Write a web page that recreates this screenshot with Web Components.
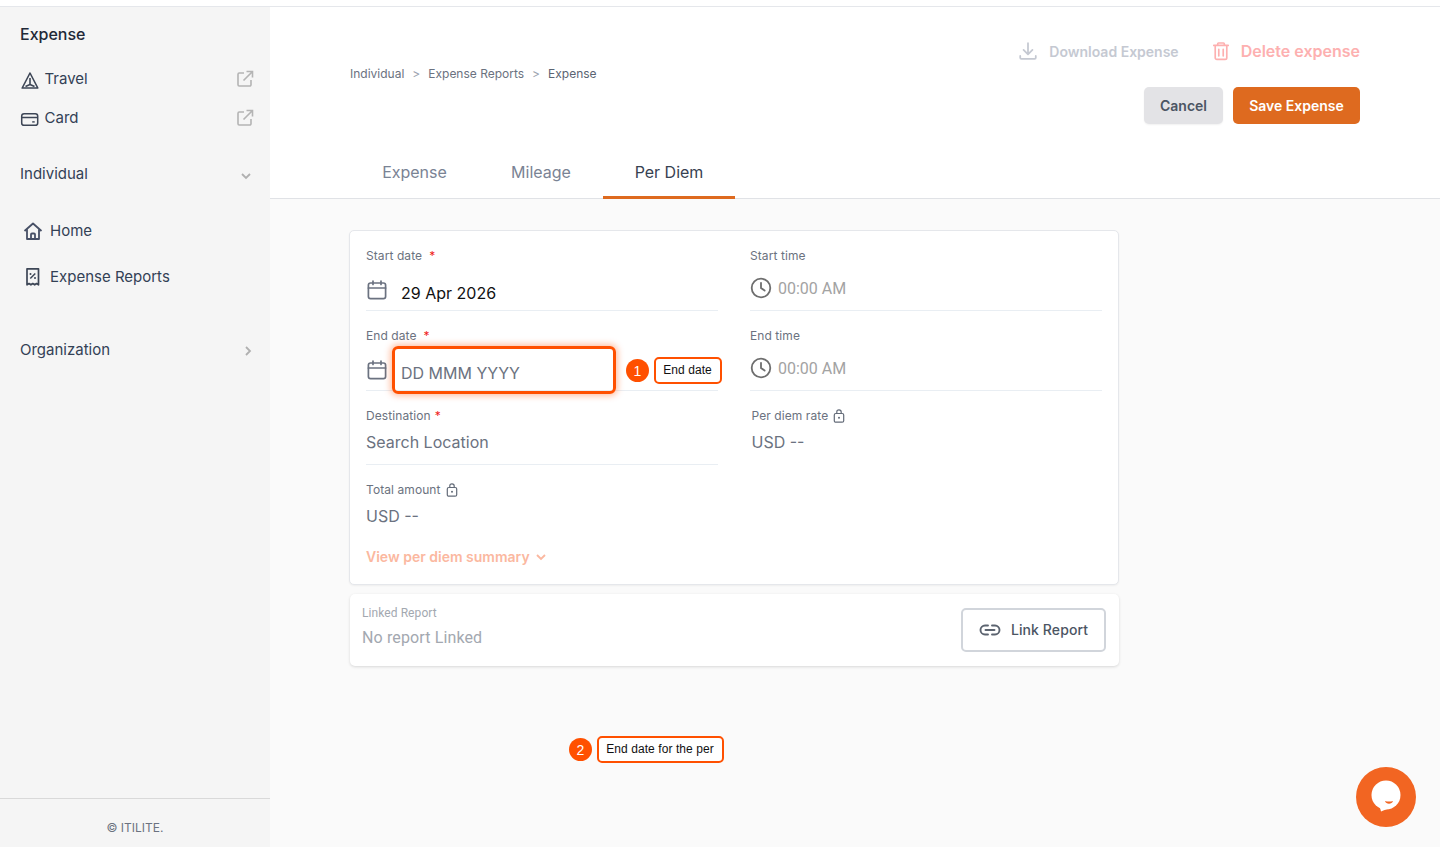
<!DOCTYPE html>
<html lang="en"><head><meta charset="utf-8"><title>Expense</title>
<style>
html,body{margin:0;padding:0;height:100%}
body{width:1440px;height:847px;overflow:hidden;font-family:Inter,"Noto Sans",sans-serif;background:#fafafa;position:relative}
</style></head><body>
<x-app>
  <x-sidebar slot="side"></x-sidebar>
  <x-page-header slot="head"></x-page-header>
  <x-form-card slot="body"></x-form-card>
  <x-linked-card slot="body"></x-linked-card>
</x-app>
<x-callout n="1" style="left:626px;top:357px;width:68px">End date</x-callout>
<x-callout n="2" style="left:569px;top:736px;width:127px">End date for the per</x-callout>
<x-highlight style="left:392px;top:346px;width:224px;height:48px"></x-highlight>
<x-chat></x-chat>
<script>
const I={
 triangle:'<svg width="20" height="20" viewBox="0 0 20 20" fill="none" stroke="#3d4656" stroke-width="1.6" stroke-linejoin="round"><path d="M10 4 2.200 19h15.600z"/><path d="M10 9v6.500M5.500 17.500 10 15.500l4.500 2"/></svg>',
 card:'<svg width="20" height="20" viewBox="0 0 20 20" fill="none" stroke="#3d4656" stroke-width="1.5"><rect x="1.700" y="5.700" width="16" height="11.600" rx="2.400"/><path d="M1.700 9.500h16"/><path d="M12.200 13.900h2.500" stroke-width="1.4"/></svg>',
 ext:'<svg width="18" height="18" viewBox="0 0 18 18" fill="none" stroke="#b4b4b4" stroke-width="1.6"><path d="M8 3H3.200A1.200 1.200 0 0 0 2 4.200V14.800A1.200 1.200 0 0 0 3.200 16H13.800A1.200 1.200 0 0 0 15 14.800V10"/><path d="M7.500 10.500 16 2M10.500 1.500H16.500V7.500"/></svg>',
 down:'<svg width="12" height="12" viewBox="0 0 12 12" fill="none" stroke="#b0b0b0" stroke-width="1.8"><path d="M2 4l4 4 4-4"/></svg>',
 right:'<svg width="12" height="12" viewBox="0 0 12 12" fill="none" stroke="#b0b0b0" stroke-width="1.8"><path d="M4 2l4 4-4 4"/></svg>',
 home:'<svg width="20" height="20" viewBox="0 0 20 20" fill="none" stroke="#475066" stroke-width="1.8" stroke-linejoin="round"><path d="M1.500 10 10 2.500l8.500 7.500"/><path d="M4 8.200V18h12V8.200"/><path d="M8 18v-4.500a1 1 0 0 1 1-1h2a1 1 0 0 1 1 1V18"/></svg>',
 receipt:'<svg width="20" height="20" viewBox="0 0 20 20" fill="none" stroke="#3d4656" stroke-width="1.700" stroke-linejoin="round"><path d="M3 1.800h11.500v16l-1.900-1.300-1.900 1.300-1.900-1.300-1.900 1.300-1.900-1.300L3 17.800z"/><path d="M6.300 11.500 11.300 6.500" stroke-width="1.500"/><circle cx="6.500" cy="7" r="1" fill="#3d4656" stroke="none"/><circle cx="11" cy="11" r="1" fill="#3d4656" stroke="none"/></svg>',
 cal:'<svg width="22" height="22" viewBox="0 0 22 22" fill="none" stroke="#6b7280" stroke-width="1.700" stroke-linecap="round"><rect x="2.400" y="4" width="17.200" height="15.600" rx="2.200"/><path d="M2.400 9h17.200M7 2v3.500M15 2v3.500"/></svg>',
 clock:'<svg width="22" height="22" viewBox="0 0 22 22" fill="none" stroke="#6e6e6e" stroke-width="1.800" stroke-linecap="round"><circle cx="11" cy="11" r="9.300"/><path d="M11 5.800V11l3.600 2.600"/></svg>',
 lock:'<svg width="14" height="14" viewBox="0 0 14 14" fill="none" stroke="#636b78" stroke-width="1.200"><rect x="2.300" y="4.500" width="9.400" height="8.700" rx="1.500"/><path d="M4.800 4.500V3a2.200 2.200 0 0 1 4.400 0v1.500"/><circle cx="7" cy="8.700" r="1" fill="#636b78" stroke="none"/></svg>',
 dl:'<svg width="20" height="20" viewBox="0 0 18 18" fill="none" stroke="#c5c9d2" stroke-width="1.600" stroke-linecap="round" stroke-linejoin="round"><path d="M9 2v9.500M5 8l4 4 4-4M2 13.500V15a1 1 0 0 0 1 1h12a1 1 0 0 0 1-1v-1.500"/></svg>',
 trash:'<svg width="20" height="20" viewBox="0 0 18 18" fill="none" stroke="#fdb0b0" stroke-width="1.500" stroke-linecap="round"><path d="M2.500 4h13M6 4V2.600A.8.800 0 0 1 6.800 1.800h4.400a.8.800 0 0 1 .8.800V4M3.800 4v11a1.500 1.500 0 0 0 1.500 1.500h7.400a1.500 1.500 0 0 0 1.500-1.500V4M7 7.500v6M11 7.500v6"/></svg>',
 link:'<svg width="22" height="22" viewBox="0 0 22 22" fill="none" stroke="#5c6470" stroke-width="1.900" stroke-linecap="round"><path d="M9 6.500H6a4.500 4.500 0 0 0 0 9H9M13 6.500h3a4.500 4.500 0 0 1 0 9H13M6.500 11h9"/></svg>',
 chev:'<svg width="12" height="12" viewBox="0 0 12 12" fill="none" stroke="#fbb8a0" stroke-width="1.900" style="margin-top:1px"><path d="M2 4l4 4 4-4"/></svg>'
};
function def(name,css,html,init){
 customElements.define(name,class extends HTMLElement{
  connectedCallback(){
   if(this.shadowRoot)return;
   const r=this.attachShadow({mode:'open'});
   r.innerHTML='<style>'+css+'</style>'+(typeof html==='function'?html(this):html);
   if(init)init(this,r);
  }
 });
}
def('x-app',`:host{display:flex;flex-direction:column;width:1440px;height:847px}
 .top{height:6px;background:#fff;border-bottom:1px solid #e5e7eb;flex:none}
 .row{flex:1;display:flex;min-height:0}
 .side{width:270px;flex:none;display:flex}
 .main{flex:1;display:flex;flex-direction:column;min-width:0}
 .body{padding:31px 0 0 79px;display:flex;flex-direction:column;gap:9px;width:770px}`,
 `<div class="top"></div><div class="row"><div class="side"><slot name="side"></slot></div>
  <div class="main"><slot name="head"></slot><div class="body"><slot name="body"></slot></div></div></div>`);

def('x-nav-row',`:host{display:flex;align-items:center;height:24px;font-size:15px;color:#334155;line-height:24px}
 .i{display:flex;width:20px;height:20px;flex:none}
 .t{flex:1}
 .e{display:flex}`,
 h=>`<span class="i" style="margin-left:${h.getAttribute('il')||0}px;margin-right:${h.getAttribute('gap')||4.5}px">${I[h.getAttribute('icon')]||''}</span><span class="t"><slot></slot></span><span class="e" style="margin-right:${h.getAttribute('er')||16}px">${h.hasAttribute('end')?I[h.getAttribute('end')]:''}</span>`);

def('x-sidebar',`:host{display:flex;flex-direction:column;width:270px;background:#f5f5f5;height:100%;box-sizing:border-box}
 .in{flex:1;padding:16px 0 0 20px;display:flex;flex-direction:column}
 .h{font-size:16px;font-weight:500;color:#1f2937;line-height:22px;margin-bottom:22px}
 .sec{display:flex;align-items:center;height:24px;font-size:15px;color:#334155}
 .sec span{flex:1}
 .foot{height:49px;border-top:1px solid #d9d9d9;box-sizing:border-box;display:flex;align-items:center;justify-content:center;font-size:12px;color:#6b7280;padding-top:9px}`,
 `<div class="in"><div class="h">Expense</div>
  <x-nav-row icon="triangle" end="ext">Travel</x-nav-row>
  <x-nav-row icon="card" end="ext" style="margin-top:15px">Card</x-nav-row>
  <div class="sec" style="margin-top:31px"><span>Individual</span><span style="flex:none;display:flex;margin:6px 18px 0 0">${I.down}</span></div>
  <x-nav-row icon="home" il="3" gap="7" style="margin-top:34px">Home</x-nav-row>
  <x-nav-row icon="receipt" il="4" gap="6" style="margin-top:22px">Expense Reports</x-nav-row>
  <div class="sec" style="margin-top:48px"><span>Organization</span><span style="flex:none;display:flex;margin:4px 16px 0 0">${I.right}</span></div>
 </div><div class="foot">© ITILITE.</div>`);

def('x-page-header',`:host{display:block;background:#fff;border-bottom:1px solid #e0e2e6;height:192px;box-sizing:border-box;position:relative}
 .top{display:flex;justify-content:space-between;padding:0 80px;height:141px}
 .crumb{font-size:12px;color:#6b7280;margin-top:60px;line-height:14px;display:flex;align-items:center;height:14px}
 .crumb i{font-style:normal;color:#9ca3af;margin:0 8px}
 .crumb b{font-weight:400;color:#5b6472}
 .r{display:flex;flex-direction:column;align-items:flex-end}
 .acts{display:flex;align-items:center;margin-top:34px;height:20px}
 .a{display:flex;align-items:center}
 .dl{font-size:14px;font-weight:600;color:#c5c9d2;margin-right:32px}
 .dl svg{margin-right:11px}
 .del{font-size:16px;font-weight:600;color:#fdb0b0}
 .del svg{margin-right:10px}
 .btns{display:flex;gap:10px;margin-top:26px}
 button{font:600 14px Inter,sans-serif;height:37px;border:0;border-radius:5px;padding:0;cursor:pointer}
 .c{width:79px;background:#e3e3e6;color:#4b5563;box-shadow:0 1px 2px rgba(0,0,0,.06)}
 .s{width:127px;background:#de6a1f;color:#fff}
 .tabs{display:flex;padding-left:80px;height:50px}
 .tab{height:50px;box-sizing:border-box;font-size:16px;color:#7a8394;display:flex;align-items:center;justify-content:center;padding-bottom:3px}
 .on{color:#374151;height:51px;border-bottom:3px solid #de6a1f;padding-bottom:1px}`,
 `<div class="top"><div class="crumb"><span>Individual</span><i>&gt;</i><span>Expense Reports</span><i>&gt;</i><b>Expense</b></div>
  <div class="r"><div class="acts"><span class="a dl">${I.dl}Download Expense</span><span class="a del">${I.trash}Delete expense</span></div>
  <div class="btns"><button class="c">Cancel</button><button class="s">Save Expense</button></div></div></div>
  <div class="tabs"><div class="tab" style="width:129px">Expense</div><div class="tab" style="width:124px">Mileage</div><div class="tab on" style="width:132px">Per Diem</div></div>`);

def('x-field',`:host{display:block;box-sizing:border-box;height:63px;border-bottom:1px solid #e9eef3}
 :host([bare]){border-bottom:0}
 .l{font-size:12px;letter-spacing:.08px;line-height:16px;color:#6b7280;display:flex;align-items:center;height:16px}
 .v{display:flex;align-items:center;font-size:16px}`,
 h=>`<div class="l"><slot name="label"></slot></div><div class="v" style="height:${h.getAttribute('vh')||'36'}px;padding-top:${h.getAttribute('vp')||0}px"><slot></slot></div>`);

def('x-form-card',`:host{display:block;box-sizing:border-box;height:355px;background:#fff;border:1px solid #e5e7eb;border-radius:5px;box-shadow:0 1px 2px rgba(0,0,0,.05);padding:17px 15px 0 16px}
 .g{display:grid;grid-template-columns:352px 352px;column-gap:32px}
 .g>*{margin-bottom:17px}
 .sr{color:#ef1c1c;margin-left:7px;font-size:12px}
 .sr2{color:#ef1c1c;margin-left:4px;font-size:12px}
 .date{color:#111;margin-left:13px;padding-top:5px}
 .ph{color:#6b7280;margin-left:13px}
 .tm{color:#a3a3a3;margin-left:6px;font:16px Roboto,sans-serif}
 .ic{display:flex}
 .gr{color:#6b7280}
 .lk{display:flex;margin-left:4px}
 .rate{margin-left:1.5px}
 .sum{font-size:14px;font-weight:600;color:#fbb8a0;display:flex;align-items:center;gap:5px;height:20px;margin-top:-10px}`,
 `<div class="g">
  <x-field vp="8"><span slot="label">Start date<span class="sr">*</span></span><span class="ic">${I.cal}</span><span class="date">29 Apr 2026</span></x-field>
  <x-field vp="6"><span slot="label">Start time</span><span class="ic">${I.clock}</span><span class="tm">00:00 AM</span></x-field>
  <x-field vp="8"><span slot="label">End date<span class="sr">*</span></span><span class="ic">${I.cal}</span><span class="ph" style="padding-top:5px">DD MMM YYYY</span></x-field>
  <x-field vp="6"><span slot="label">End time</span><span class="ic">${I.clock}</span><span class="tm">00:00 AM</span></x-field>
  <x-field style="height:57px"><span slot="label">Destination<span class="sr2">*</span></span><span class="gr">Search Location</span></x-field>
  <x-field bare style="height:57px" class="rate"><span slot="label" style="display:flex;align-items:center">Per diem rate<span class="lk">${I.lock}</span></span><span class="gr">USD --</span></x-field>
  <x-field bare style="height:57px"><span slot="label" style="display:flex;align-items:center">Total amount<span class="lk">${I.lock}</span></span><span class="gr">USD --</span></x-field>
  </div>
  <div class="sum">View per diem summary ${I.chev}</div>`);

def('x-linked-card',`:host{display:flex;align-items:center;box-sizing:border-box;height:72px;margin-left:1px;background:#fff;border-radius:5px;box-shadow:0 1px 3px rgba(0,0,0,.14);padding:0 13px 0 12px}
 .t{flex:1;padding-bottom:7px;font-family:Roboto,sans-serif}
 .l{font-size:12px;line-height:16px;color:#a3a8b0;letter-spacing:.08px}
 .n{font-size:16px;line-height:22px;color:#a3a8b0;margin-top:6px;letter-spacing:.13px}
 button{width:145px;height:44px;background:#fff;border:2px solid #d1d5db;border-radius:5px;font:500 14px Inter,sans-serif;letter-spacing:.1px;color:#4b5563;display:flex;align-items:center;justify-content:center;gap:10px;padding:0;box-sizing:border-box}
 button span{padding-bottom:2px}`,
 `<div class="t"><div class="l">Linked Report</div><div class="n">No report Linked</div></div><button>${I.link}<span>Link Report</span></button>`);

def('x-callout',`:host{position:absolute;display:flex;align-items:center;height:27px;font-family:"Liberation Sans",Arial,sans-serif}
 .n{position:absolute;width:23px;height:23px;border-radius:50%;background:#ff5000;color:#fff;font-size:14px;display:flex;align-items:center;justify-content:center;left:0;top:2px}
 .b{position:absolute;top:0;left:28px;box-sizing:border-box;height:100%;padding:0 1px 1px 0;border:2px solid #ff5000;border-radius:5px;background:#fff;color:#111;font-size:12px;letter-spacing:.08px;display:flex;align-items:center;justify-content:center;white-space:nowrap}`,
 h=>`<span class="n">${h.getAttribute('n')}</span><span class="b" style="width:${parseInt(h.style.width)}px"><slot></slot></span>`);

def('x-highlight',`:host{position:absolute;display:block;box-sizing:border-box;border:3px solid #ff5000;border-radius:6px;box-shadow:0 0 6px 2px rgba(255,80,0,.35);pointer-events:none}`,'');

def('x-chat',`:host{position:absolute;left:1356px;top:767px;width:60px;height:60px;border-radius:50%;background:#f26522;display:flex;align-items:center;justify-content:center}`,
 `<svg width="32" height="32" viewBox="0 0 32 32" style="margin-top:-2px"><circle cx="16" cy="15" r="14.500" fill="#fff"/><path d="M9 24 11 31.500 17 29z" fill="#fff"/><path d="M15 21c2.500.8 5.500.8 8 0-1 3.500-7 3.500-8 0z" fill="#f26522"/></svg>`);
</script>
</body></html>
